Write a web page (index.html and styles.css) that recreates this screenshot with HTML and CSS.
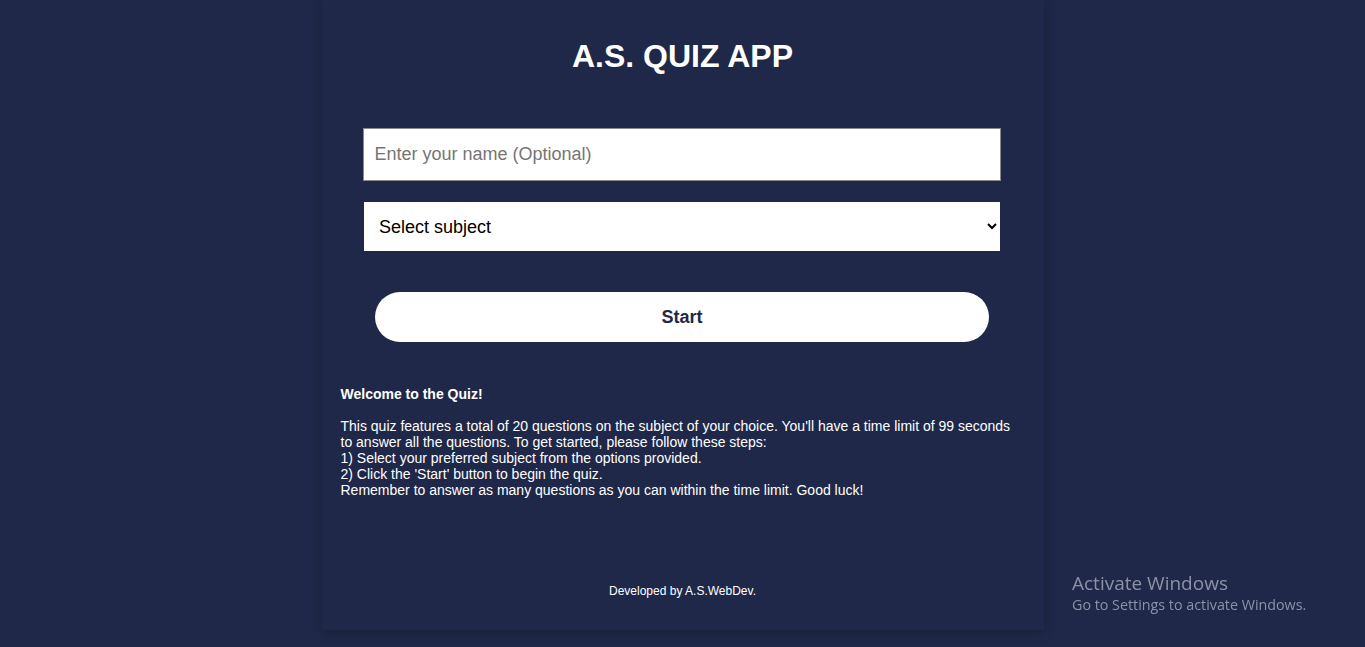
FILE: index.html
```html
<!DOCTYPE html>
<html lang="en">
<head>
<meta charset="utf-8">
<title>A.S. Quiz App</title>
<link rel="stylesheet" href="styles.css">
</head>
<body>
<main class="card">
  <h1 class="title">A.S. QUIZ APP</h1>
  <input class="name-input" type="text" placeholder="Enter your name (Optional)">
  <select class="subject-select">
    <option>Select subject</option>
  </select>
  <button class="start-btn" type="button">Start</button>
  <div class="info">
    <p class="info-title">Welcome to the Quiz!</p>
    <p class="info-body">This quiz features a total of 20 questions on the subject of your choice. You'll have a time limit of 99 seconds to answer all the questions. To get started, please follow these steps:<br>1) Select your preferred subject from the options provided.<br>2) Click the 'Start' button to begin the quiz.<br>Remember to answer as many questions as you can within the time limit. Good luck!</p>
  </div>
  <footer class="footer">Developed by A.S.WebDev.</footer>
</main>
<div class="watermark">
  <div class="wm-title">Activate Windows</div>
  <div class="wm-sub">Go to Settings to activate Windows.</div>
</div>
</body>
</html>
```

FILE: styles.css
```css
html, body {
  margin: 0;
  padding: 0;
  height: 100%;
}
body {
  background: #1f2848;
  font-family: "Liberation Sans", Arial, sans-serif;
  color: #ffffff;
  overflow: hidden;
}
.card {
  width: 722px;
  height: 630px;
  margin: 0 auto;
  background: #1f2848;
  box-shadow: 0 2px 10px rgba(0, 0, 0, 0.25);
  display: flex;
  flex-direction: column;
  align-items: center;
  box-sizing: border-box;
}
.title {
  margin: 38px 0 0;
  font-size: 32px;
  line-height: 37px;
  font-weight: bold;
  text-align: center;
}
.name-input {
  margin-top: 53px;
  margin-left: -2px;
  width: 638px;
  height: 53px;
  box-sizing: border-box;
  border: 1px solid #8a8a8a;
  padding: 0 11px;
  font-family: "Liberation Sans", Arial, sans-serif;
  font-size: 18px;
  color: #000;
  background: #fff;
  outline: none;
}
.name-input::placeholder {
  color: #757575;
}
.subject-select {
  margin-top: 21px;
  margin-left: -1px;
  width: 636px;
  height: 49px;
  box-sizing: border-box;
  border: none;
  padding: 0 11px;
  font-family: "Liberation Sans", Arial, sans-serif;
  font-size: 18px;
  color: #000;
  background: #fff;
  outline: none;
}
.start-btn {
  margin-top: 41px;
  margin-left: -1px;
  width: 614px;
  height: 50px;
  border: none;
  border-radius: 25px;
  background: #fff;
  color: #1f2848;
  font-family: "Liberation Sans", Arial, sans-serif;
  font-size: 18px;
  font-weight: bold;
  cursor: pointer;
}
.info {
  align-self: stretch;
  margin-top: 44px;
  padding: 0 22px 0 19px;
  font-size: 14px;
  line-height: 16px;
}
.info p {
  margin: 0;
}
.info-title {
  font-weight: bold;
  margin-bottom: 16px !important;
}
.footer {
  margin-top: auto;
  padding-bottom: 32px;
  font-size: 12px;
  line-height: 14px;
  font-weight: normal;
  text-align: center;
}
.watermark {
  position: fixed;
  left: 1072px;
  top: 571px;
  color: #8c92a6;
  font-family: "Open Sans", "Noto Sans", sans-serif;
}
.wm-title {
  font-size: 19px;
  line-height: 24px;
}
.wm-sub {
  font-size: 14.3px;
  line-height: 20px;
}
```
